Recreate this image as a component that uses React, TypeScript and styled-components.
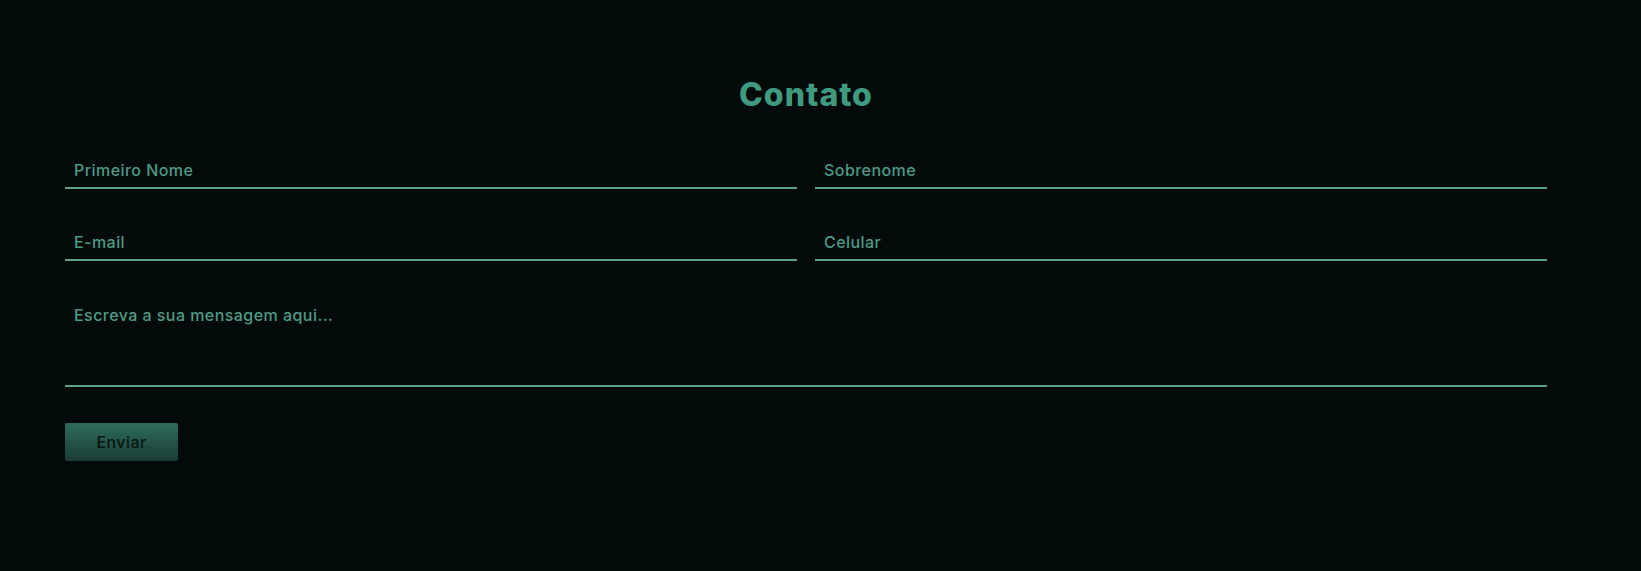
import React from "react";
import styled, { createGlobalStyle } from "styled-components";

const Global = createGlobalStyle`
  html, body { margin: 0; padding: 0; background: #020b0a; }
  body { font-family: Inter, "Noto Sans", sans-serif; min-height: 571px; }
  * { box-sizing: border-box; }
`;

const Section = styled.section`
  width: 1641px;
  min-height: 571px;
  padding: 75px 94px 0 65px;
  display: flex;
  flex-direction: column;
  align-items: stretch;
`;

const Title = styled.h2`
  margin: 0 0 34px;
  text-align: center;
  font-family: Inter, "Noto Sans", sans-serif;
  font-weight: 800;
  font-size: 32px;
  letter-spacing: 1px;
  line-height: 40px;
  color: #3f9a80;
`;

const Form = styled.form`
  display: flex;
  flex-direction: column;
  gap: 32px;
`;

const Row = styled.div`
  display: grid;
  grid-template-columns: 1fr 1fr;
  column-gap: 18px;
`;

const fieldBase = `
  width: 100%;
  background: transparent;
  border: none;
  border-bottom: 2px solid #5b9e8a;
  outline: none;
  color: #5b9e8a;
  font-family: Inter, "Noto Sans", sans-serif;
  font-size: 16px;
  letter-spacing: 0.45px;
  font-weight: 500;
  padding: 0 9px;
  &::placeholder { color: #4f9a85; opacity: 1; }
`;

const Input = styled.input`
  ${fieldBase}
  height: 40px;
  padding-top: 3px;
`;

const TextArea = styled.textarea`
  ${fieldBase}
  height: 94px;
  padding-top: 10px;
  line-height: 24px;
  resize: none;
  display: block;
`;

const Button = styled.button`
  margin-top: 4px;
  align-self: flex-start;
  width: 113px;
  height: 38px;
  border: none;
  border-radius: 2px;
  background: linear-gradient(180deg, #2e6c5d 0%, #1a3c34 100%);
  color: #07150f;
  font-family: Inter, "Noto Sans", sans-serif;
  font-size: 16px;
  letter-spacing: 0.45px;
  font-weight: 500;
  cursor: pointer;
`;

export default function App() {
  return (
    <>
      <Global />
      <Section>
        <Title>Contato</Title>
        <Form onSubmit={(e) => e.preventDefault()}>
          <Row>
            <Input placeholder="Primeiro Nome" />
            <Input placeholder="Sobrenome" />
          </Row>
          <Row>
            <Input placeholder="E-mail" />
            <Input placeholder="Celular" />
          </Row>
          <TextArea placeholder="Escreva a sua mensagem aqui..." />
          <Button type="submit">Enviar</Button>
        </Form>
      </Section>
    </>
  );
}
